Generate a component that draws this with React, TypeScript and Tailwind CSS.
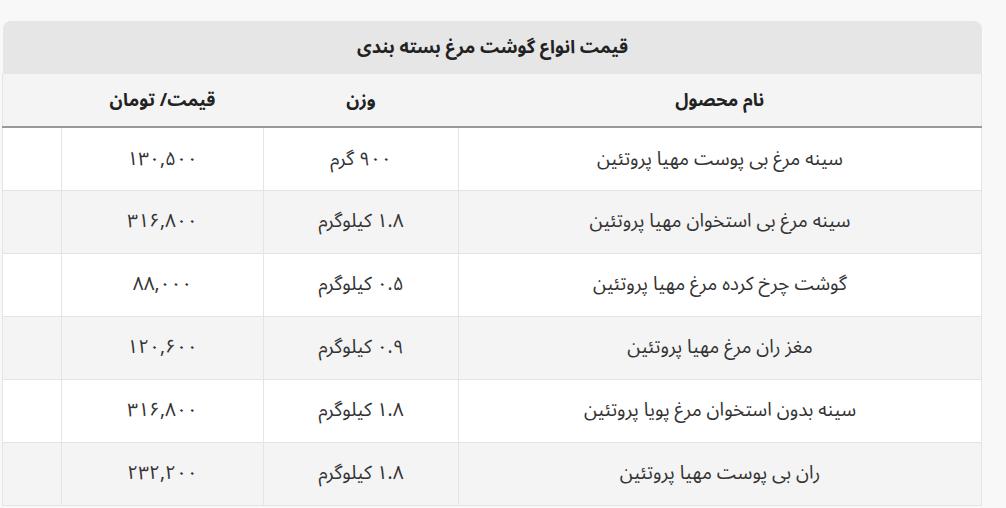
import React from "react";

const rows = [
  { name: "سینه مرغ بی پوست مهیا پروتئین", w: "۹۰۰ گرم", p: "۱۳۰,۵۰۰" },
  { name: "سینه مرغ بی استخوان مهیا پروتئین", w: "۱.۸ کیلوگرم", p: "۳۱۶,۸۰۰" },
  { name: "گوشت چرخ کرده مرغ مهیا پروتئین", w: "۰.۵ کیلوگرم", p: "۸۸,۰۰۰" },
  { name: "مغز ران مرغ مهیا پروتئین", w: "۰.۹ کیلوگرم", p: "۱۲۰,۶۰۰" },
  { name: "سینه بدون استخوان مرغ پویا پروتئین", w: "۱.۸ کیلوگرم", p: "۳۱۶,۸۰۰" },
  { name: "ران بی پوست مهیا پروتئین", w: "۱.۸ کیلوگرم", p: "۲۳۲,۲۰۰" },
];

export default function App() {
  return (
    <div
      className="min-h-screen w-full bg-[#f8f8f8] pt-[21px] pl-[3px]"
      style={{ fontFamily: '"Noto Sans Arabic", "Noto Sans", "DejaVu Sans", sans-serif' }}
    >
      <div dir="rtl" className="w-[979px] text-[#333]">
        <div className="flex h-[53px] items-center justify-center rounded-t-lg bg-[#e6e6e6] text-[18px] font-bold text-[#222]">
          قیمت انواع گوشت مرغ بسته بندی
        </div>
        <table className="w-full table-fixed border-collapse border-x border-b border-[#e4e4e4] text-[19px]">
          <colgroup>
            <col className="w-[523px]" />
            <col className="w-[195px]" />
            <col className="w-[202px]" />
            <col className="w-[59px]" />
          </colgroup>
          <thead>
            <tr className="h-[53px] border-b-2 border-[#999] bg-[#f4f4f4] text-[18px] text-[#222]">
              <th className="font-bold">نام محصول</th>
              <th className="font-bold">وزن</th>
              <th className="font-bold">قیمت/ تومان</th>
              <th></th>
            </tr>
          </thead>
          <tbody>
            {rows.map((r, i) => (
              <tr
                key={i}
                className={`h-[63px] border-t border-[#e4e4e4] ${i % 2 === 1 ? "bg-[#f4f4f4]" : "bg-white"}`}
              >
                <td className="text-center">{r.name}</td>
                <td className="border-r border-[#e4e4e4] text-center">{r.w}</td>
                <td className="border-r border-[#e4e4e4] text-center">{r.p}</td>
                <td className="border-r border-[#e4e4e4]"></td>
              </tr>
            ))}
          </tbody>
        </table>
      </div>
    </div>
  );
}
